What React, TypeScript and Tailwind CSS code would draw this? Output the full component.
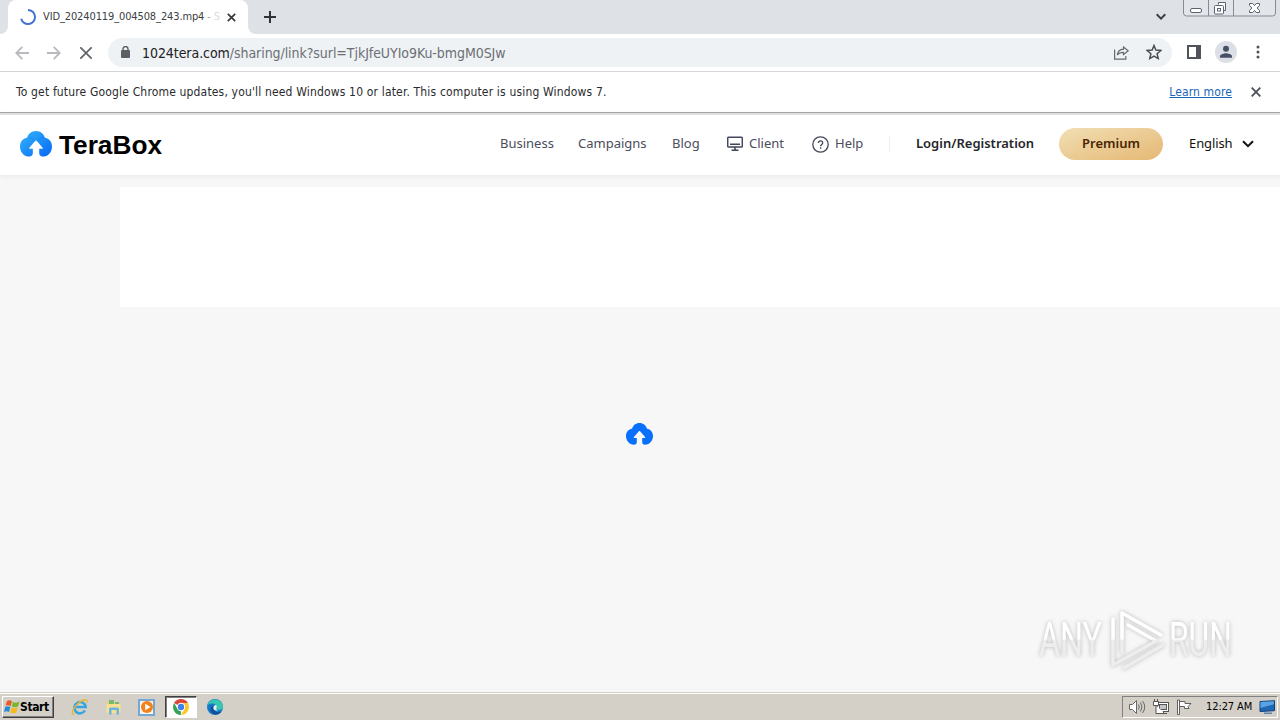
import type { ReactNode } from "react"

const CLOUD =
  "M16 0C11.6 0 8.2 2.7 7.2 6.4C3 6.9 0 10.2 0 14.8C0 20.2 4 24.6 9.4 24.6C11.700 24.6 12.800 23.400 12.800 21.500V17H9.700C9.200 17 9 16.400 9.400 16L15.300 9.400C15.700 9 16.300 9 16.700 9.400L22.600 16C23 16.400 22.800 17 22.300 17H19.200V21.500C19.200 23.400 20.300 24.6 22.6 24.6C28 24.6 32 20.2 32 14.8C32 10.2 29 6.9 24.8 6.4C23.8 2.7 20.4 0 16 0Z"

function TabStrip() {
  return (
    <div className="flex h-[34px] bg-[#dee1e6] font-['DejaVu_Sans_Condensed','DejaVu_Sans',sans-serif]">
      <div className="h-full w-2 bg-white">
        <div className="h-full rounded-br-lg bg-[#dee1e6]" />
      </div>
      <div className="flex h-full w-60 items-center rounded-t-lg bg-white pl-3">
        <svg className="h-4 w-4 shrink-0" viewBox="0 0 16 16" fill="none">
          <path d="M8 1A7 7 0 1 1 1.2 9.7" stroke="#4373d3" strokeWidth="2" />
        </svg>
        <span className="ml-[7px] w-[177px] shrink-0 overflow-hidden whitespace-nowrap text-[11px] tracking-[-0.12px] text-[#3c4043]">
          VID_20240119_004508_243.mp4 <span className="text-[#9aa0a6]">-</span> <span className="text-[#dadce0]">S</span>
        </span>
        <svg className="ml-[7px] h-[9px] w-[9px] shrink-0" viewBox="0 0 9 9" stroke="#35383c" strokeWidth="1.7">
          <path d="M.8.8l7.4 7.4M8.2.8L.8 8.2" />
        </svg>
      </div>
      <div className="h-full w-2 bg-white">
        <div className="h-full rounded-bl-lg bg-[#dee1e6]" />
      </div>
      <svg className="mt-[11px] ml-2 h-3 w-3" viewBox="0 0 12 12" stroke="#303338" strokeWidth="2">
        <path d="M6 0v12M0 6h12" />
      </svg>
      <svg className="mt-[13px] ml-auto h-2 w-[10px]" viewBox="0 0 10 8" fill="none" stroke="#3c4043" strokeWidth="2">
        <path d="M.7 1.3L5 5.6l4.3-4.3" />
      </svg>
      <svg className="mr-1 ml-[17px] h-[18px] w-[93px]" viewBox="0 0 93 18" fill="none" stroke="#858b97">
        <path d="M.5 0v13q0 3 3 3h86q3 0 3-3V0M25.500 0v16M50.500 0v16" fill="#e2e5ea" />
        <g stroke="#5e6370">
          <rect x="7.500" y="8.500" width="11" height="4" rx="1.500" fill="#fff" />
          <path d="M35.500 4.500v-2h7v8h-2" fill="#fff" />
          <rect x="31.500" y="5.500" width="9" height="8.500" rx="1" fill="#fff" />
          <rect x="34.500" y="8.500" width="3" height="2.500" />
          <path d="M66.500 3.500h3.200l1.800 2 1.800-2h3.200v2l-2.500 2.500 2.500 2.500v2h-3.200l-1.800-2-1.800 2h-3.200v-2L69 8l-2.500-2.500z" fill="#fff" />
        </g>
      </svg>
    </div>
  )
}

function Toolbar() {
  return (
    <div className="flex h-[38px] items-center border-b border-[#d3d5d8] bg-white pl-[15px]">
      <svg className="h-[14px] w-[14px]" viewBox="0 0 14 14" fill="none" stroke="#b8babd" strokeWidth="1.8">
        <path d="M14 7H1.500M7.300.8L1.200 7l6.100 6.200" />
      </svg>
      <svg className="ml-[18px] h-[14px] w-[14px]" viewBox="0 0 14 14" fill="none" stroke="#b8babd" strokeWidth="1.8">
        <path d="M0 7h12.500M6.700.8L12.800 7l-6.100 6.200" />
      </svg>
      <svg className="ml-[19px] h-3 w-3" viewBox="0 0 12 12" stroke="#5f6368" strokeWidth="1.7">
        <path d="M.3.3l11.400 11.400M11.700.3L.3 11.700" />
      </svg>
      <div className="ml-4 flex h-[29px] w-[1064px] items-center rounded-full bg-[#eff2f4] pl-[13px]">
        <svg className="-mt-px h-3 w-[9px]" viewBox="0 0 9 12">
          <rect y="4" width="9" height="8" rx="1" fill="#5b5f64" />
          <path d="M2 4.500V3a2.500 2.500 0 0 1 5 0v1.500" fill="none" stroke="#5b5f64" strokeWidth="1.400" />
        </svg>
        <span className="mt-px ml-3 whitespace-nowrap font-['DejaVu_Sans_Condensed','DejaVu_Sans',sans-serif] text-[14px] tracking-[-0.06px] text-[#6b6f74]">
          <span className="text-[#202124]">1024tera.com</span>/sharing/link?surl=TjkJfeUYIo9Ku-bmgM0SJw
        </span>
        <svg className="mr-[17px] ml-auto h-[14px] w-[15px]" viewBox="0 0 15 14" fill="none" stroke="#65696e" strokeWidth="1.200">
          <path d="M.6 3.500v9.700h11.200V10" />
          <path d="M9.500 1L14.200 4.800 9.500 8.600V6.400C6.300 6.400 4.600 7.200 3.300 9 3.700 5.700 5.800 3.500 9.500 3.200z" />
        </svg>
        <svg className="-mt-0.5 mr-[10px] h-4 w-4" viewBox="0 0 14 14" fill="none" stroke="#4b4f54" strokeWidth="1.300">
          <path d="M7 1.300l1.600 4 4.400.4-3.300 2.800 1 4.200L7 10.500l-3.700 2.200 1-4.200L1 5.700l4.400-.4z" />
        </svg>
      </div>
      <svg className="-mt-px ml-[15px] h-[14px] w-[14px]" viewBox="0 0 14 14">
        <path d="M1 1h12v12H1z" fill="none" stroke="#505357" strokeWidth="2" />
        <path d="M9 0h5v14H9z" fill="#505357" />
      </svg>
      <svg className="-mt-0.5 ml-[14px] h-[22px] w-[22px]" viewBox="0 0 22 22" fill="#475069">
        <circle cx="11" cy="11" r="11" fill="#dcdfe5" />
        <circle cx="11" cy="7.800" r="3" />
        <path d="M5 16.800v-1.500c0-2 4-3 6-3s6 1 6 3v1.500z" />
      </svg>
      <svg className="-mt-px ml-[19px] h-[14px] w-[4px]" viewBox="0 0 4 14" fill="#505357">
        <circle cx="2" cy="2" r="1.500" />
        <circle cx="2" cy="7" r="1.500" />
        <circle cx="2" cy="12" r="1.500" />
      </svg>
    </div>
  )
}

function InfoBar() {
  return (
    <div className="flex h-10 items-center bg-white pr-[19px] pl-4 font-['DejaVu_Sans_Condensed','DejaVu_Sans',sans-serif] text-[12px] text-[#2a2b2e]">
      <span className="whitespace-nowrap tracking-[0.165px]">
        To get future Google Chrome updates, you'll need Windows 10 or later. This computer is using Windows 7.
      </span>
      <a href="#" className="ml-auto whitespace-nowrap tracking-[0.12px] text-[#1866b9] underline">Learn more</a>
      <svg className="ml-[19px] h-[10px] w-[10px]" viewBox="0 0 10 10" stroke="#4f5358" strokeWidth="1.900">
        <path d="M.7.7l8.600 8.600M9.300.7L.7 9.300" />
      </svg>
    </div>
  )
}

function NavItem({ width, children }: { width: string; children: ReactNode }) {
  return <a href="#" className={`flex shrink-0 items-center whitespace-nowrap ${width}`}>{children}</a>
}

function SiteHeader() {
  return (
    <header className="flex h-[62px] shrink-0 items-center border-t-2 border-[#dfdfdf] bg-white pb-0.5 pl-5 font-['Noto_Sans',sans-serif] text-[13px] text-[#4b4c5c] shadow-[0_1px_5px_rgba(0,0,0,0.07)]">
      <svg className="h-[26px] w-8" viewBox="0 0 32 25" preserveAspectRatio="none">
        <defs>
          <linearGradient id="cloud" x1="0" y1="0" x2="1" y2="1">
            <stop stopColor="#32b6fb" />
            <stop offset="1" stopColor="#0867f7" />
          </linearGradient>
        </defs>
        <path d={CLOUD} fill="url(#cloud)" />
        <path d="M7.300 6.400c3.500-.3 6.200 1.300 8 3.900M24.700 6.400c-3.500-.2-6.500 1.500-8 3.900" fill="none" stroke="#1478ef" strokeWidth=".8" opacity=".5" />
      </svg>
      <svg className="ml-[5px] h-8 w-28" viewBox="0 0 112 32">
        <text x="2" y="26" textLength="103" lengthAdjust="spacingAndGlyphs" fontSize="26" fontWeight="700" fontFamily="Liberation Sans, sans-serif">
          TeraBox
        </text>
      </svg>
      <nav className="ml-auto flex items-center">
        <NavItem width="w-[78px]">Business</NavItem>
        <NavItem width="w-[94px]">Campaigns</NavItem>
        <NavItem width="w-[55px]">Blog</NavItem>
        <NavItem width="w-[85px]">
          <svg className="mr-1.5 h-4 w-4" viewBox="0 0 16 16" fill="none" stroke="#45475a" strokeWidth="1.500">
            <rect x=".7" y="1.200" width="14.600" height="9.800" rx="1" />
            <path d="M3 8.200h10M8 11v3M4.500 14.200h7" strokeWidth="1.600" />
          </svg>
          Client
        </NavItem>
        <NavItem width="w-[77px]">
          <svg className="mr-1.5 h-[17px] w-[17px]" viewBox="0 0 17 17" fill="none" stroke="#45475a" strokeWidth="1.300">
            <circle cx="8.500" cy="8.500" r="7.700" />
            <path d="M6.400 7.100c0-1.500.8-2.200 2.100-2.200s2.200.8 2.200 2c0 1.600-2.100 1.500-2.100 3.300M8.600 11.300v1.400" />
          </svg>
          Help
        </NavItem>
      </nav>
      <span className="h-4 w-px bg-[#f0f0f3]" />
      <a href="#" className="ml-[26px] w-[143px] whitespace-nowrap font-semibold text-[#25262b]">Login/Registration</a>
      <button className="h-8 w-[104px] rounded-full bg-linear-to-br from-[#f1dfb4] to-[#e5b873] font-semibold text-[#492604]">
        Premium
      </button>
      <span className="ml-[26px] w-[53px] tracking-[-0.1px] text-[#111]">English</span>
      <svg className="mr-[26px] h-2 w-3" viewBox="0 0 12 8" fill="none" stroke="#111" strokeWidth="2">
        <path d="M1 1.200l5 5 5-5" />
      </svg>
    </header>
  )
}

function Watermark() {
  return (
    <svg
      className="absolute right-[36px] bottom-[19px] h-[68px] w-[208px] drop-shadow-[0_0_2px_rgba(0,0,0,0.25)]"
      viewBox="0 0 208 68"
    >
      <defs>
        <linearGradient id="mark" x1="0" y1="0" x2="0" y2="68" gradientUnits="userSpaceOnUse">
          <stop offset=".5" stopColor="#fff" />
          <stop offset=".52" stopColor="#ededed" />
        </linearGradient>
      </defs>
      <g fill="url(#mark)" fontFamily="Roboto, sans-serif" fontSize="48">
        <text x="3" y="51" textLength="63" lengthAdjust="spacingAndGlyphs">ANY</text>
        <text x="133" y="51" textLength="63" lengthAdjust="spacingAndGlyphs">RUN</text>
      </g>
      <g fill="none" stroke="url(#mark)" strokeWidth="3.500" strokeLinejoin="round" strokeLinecap="round">
        <path d="M86 47V8l39 22M92 20l28 16-43 24V14" />
        <path d="M88 63l39-23" />
      </g>
    </svg>
  )
}

function Taskbar() {
  return (
    <footer className="flex h-7 items-center border-t border-[#d4d0c8] bg-[#d4d0c8] font-['DejaVu_Sans_Condensed','DejaVu_Sans',sans-serif] text-[11px] shadow-[inset_0_1px_0_#fff]">
      <button className="mt-px ml-[2px] flex h-[22px] w-[52px] items-center border border-t-white border-r-[#404040] border-b-[#404040] border-l-white pl-px font-bold shadow-[inset_-1px_-1px_0_#808080]">
        <svg className="h-4 w-4 shrink-0" viewBox="0 0 16 16">
          <path d="M3 2c2-1 3-1 5 .3L6.700 7.200C5 6 3.500 6 1.500 6.700z" fill="#e95a24" />
          <path d="M9 2.800c2 1.200 4 1 6.500 0L14 7.600c-2 .9-4 .9-6.200 0z" fill="#76b72d" />
          <path d="M1.300 7.700c2-.8 3.500-.7 5 .3L5 12.900c-1.700-1-3-1-5 0z" fill="#278ad7" />
          <path d="M7.500 8.600c2.300 1 4 .9 6.300 0l-1.500 4.900c-2.300 1-4.100.9-6 0z" fill="#f7b91c" />
        </svg>
        <span className="text-[12px] tracking-[-0.4px]">Start</span>
      </button>
      <div className="mt-px ml-[17px] flex items-center">
        <svg className="h-[18px] w-[18px]" viewBox="0 0 18 18" fill="none">
          <path d="M14 12.500A5.700 5.700 0 1 1 14.700 9H4" stroke="#36a4df" strokeWidth="2.500" />
          <path d="M3.500 15.500C0 18 .5 12 6 6.500S17.500 0 16 4.500" stroke="#e8b631" strokeWidth="1.400" />
        </svg>
        <svg className="ml-4 h-[18px] w-[18px]" viewBox="0 0 18 18">
          <path d="M2 3.500h6l1 1.500h6v10H2z" fill="#f0d06b" />
          <path d="M4 2h5v4H4zM10 4h4v3h-4z" fill="#78ba72" />
          <path d="M1.500 6h14v9h-14z" fill="#f8e08f" />
          <path d="M4 16.500V11q0-1.500 1.500-1.500h7Q14 9.500 14 11v5.500h-2.500V12h-5v4.500z" fill="#68b5e4" />
        </svg>
        <div className="ml-[15px] flex h-[17px] w-[17px] items-center justify-center border-2 border-[#73a8d5] bg-[#f7f4ed]">
          <svg className="h-3 w-3" viewBox="0 0 12 12">
            <circle cx="6" cy="6" r="6" fill="#f0811c" />
            <path d="M4.200 2.700L9.500 6 4.200 9.300z" fill="#fff" />
          </svg>
        </div>
        <div className="ml-[10px] flex h-[22px] w-8 items-center justify-center border border-t-[#404040] border-r-white border-b-white border-l-[#404040] bg-white shadow-[inset_1px_1px_0_#808080]">
          <svg className="h-4 w-4" viewBox="0 0 16 16">
            <path d="M8 8L1.100 4A8 8 0 0 1 14.900 4z" fill="#df4435" />
            <path d="M8 8h-.1L8 4h6.900A8 8 0 0 1 8 16l3.500-6z" fill="#fac72c" />
            <path d="M8 8v4l-.1 4A8 8 0 0 1 1.100 4l3.500 6z" fill="#37a252" />
            <circle cx="8" cy="8" r="4.200" fill="#fff" />
            <circle cx="8" cy="8" r="3.200" fill="#3f80ea" />
          </svg>
        </div>
        <svg className="ml-[10px] h-4 w-4" viewBox="0 0 16 16">
          <circle cx="8" cy="8" r="8" fill="#1479c9" />
          <path d="M.2 7A8 8 0 0 1 16 7.500c0 2.500-2 3.500-4 3.500s-3-1-2.500-2C10.500 7 8.500 4.500 5 4.500 2.500 4.500.7 5.700.2 7z" fill="#38c6b1" />
          <path d="M6.300 8.500c0 4 4.700 5.500 8.200 3.700-1.500 3-6 4.400-9 2.300s-3-6.500 1-8z" fill="#124f96" />
          <path d="M9.500 9c1-1.500.1-2.800-1-3-1.500.5-2.200 2-2.200 3 .3 2 2.400 3.200 4.700 2.700-1.300-.5-2-1.500-1.500-2.700z" fill="#e3eef3" />
        </svg>
      </div>
      <div className="mt-px mr-0.5 ml-auto flex h-[22px] w-[156px] items-center border border-t-[#808080] border-r-white border-b-white border-l-[#808080] pl-[6px]">
        <svg className="h-4 w-[17px]" viewBox="0 0 17 16" stroke="#686868" fill="none">
          <path d="M.5 5.500h3l4-4v13l-4-4h-3z" fill="#fff" />
          <path d="M9.500 5.500q1.500 2.500 0 5M11.500 3.500q3 4.500 0 9M13.500 2q4.500 6 0 12" />
        </svg>
        <svg className="ml-[7px] h-4 w-4" viewBox="0 0 16 16" stroke="#555" fill="#fff">
          <rect x="4.500" y="3.500" width="11" height="9" />
          <rect x="6.500" y="5.500" width="7" height="5" fill="#c4c4c4" />
          <path d="M1.500 0v3M4.500 0v3M.5 2.500h5v4h-5zM3 6.500v8h9M6 14.500h8M10.500 12v3" />
        </svg>
        <svg className="ml-[7px] h-4 w-4" viewBox="0 0 16 16" stroke="#606060" fill="#fff">
          <path d="M1.500 1v14.500h2V1zM3.500 2.500H9v2h6l-3 3 1 2H8.500v-2h-5z" />
        </svg>
        <span className="ml-[14px] w-[53px] whitespace-nowrap text-[11px] tracking-[-0.1px]">12:27 AM</span>
        <svg className="h-[15px] w-[17px]" viewBox="0 0 17 15">
          <path d="M1 1.500l14.500-.8v10L1 11.500z" fill="#1d67b3" stroke="#123f7b" />
          <path d="M1.500 2l13.500-.8v3L1.500 8z" fill="#5aa2e3" />
          <path d="M5 12.500h8v1.500H5z" fill="#5c84ad" />
        </svg>
      </div>
    </footer>
  )
}

export default function App() {
  return (
    <div className="flex h-[720px] w-[1280px] flex-col overflow-hidden bg-[#f7f7f7]">
      <TabStrip />
      <Toolbar />
      <InfoBar />
      <div className="h-px shrink-0 bg-[#a7a7a7]" />
      <SiteHeader />
      <main className="relative flex flex-1 flex-col items-center pt-3">
        <section className="h-[120px] w-[1160px] self-end bg-white" />
        <svg className="mt-[116px] mr-px h-[22px] w-[27px]" viewBox="0 0 32 25" preserveAspectRatio="none">
          <path d={CLOUD} fill="#0870fb" />
        </svg>
        <Watermark />
      </main>
      <Taskbar />
    </div>
  )
}
